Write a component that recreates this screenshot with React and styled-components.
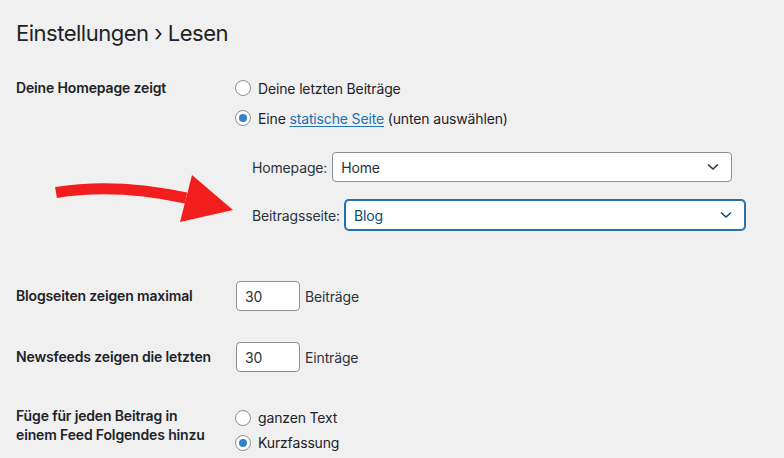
import React from 'react';
import styled, { createGlobalStyle } from 'styled-components';

const colors = {
    page: '#f0f0f1',
    text: '#1d2327',
    soft: '#2c3338',
    border: '#8c8f94',
    blue: '#2271b1',
    radioDot: '#3582c4',
    focusText: '#0a4b78',
    arrow: '#f21d1d',
};

const GlobalStyle = createGlobalStyle`
    html, body {
        margin: 0;
        padding: 0;
        background: ${colors.page};
    }
    body {
        font-family: Inter, "Liberation Sans", Arial, sans-serif;
        font-size: 14px;
        letter-spacing: -0.15px;
        color: ${colors.text};
        -webkit-font-smoothing: antialiased;
    }
`;

const Page = styled.div`
    position: relative;
    width: 784px;
    height: 458px;
    overflow: hidden;
    padding: 18px 16px 0;
    box-sizing: border-box;
`;

const Title = styled.h1`
    margin: 0;
    font-size: 22px;
    font-weight: 400;
    letter-spacing: -0.5px;
    line-height: 30px;
    color: ${colors.text};
`;

const Row = styled.div`
    display: grid;
    grid-template-columns: 220px 1fr;
    align-items: ${(p) => (p.$center ? 'center' : 'start')};
    margin-top: ${(p) => p.$top}px;
`;

const RowLabel = styled.div`
    font-weight: 600;
    line-height: ${(p) => p.$lh || 30}px;
    padding-top: ${(p) => p.$pad || 0}px;
`;

const Options = styled.div`
    display: flex;
    flex-direction: column;
`;

const Option = styled.label`
    display: flex;
    align-items: center;
    height: ${(p) => p.$h || 30}px;
    gap: 7px;
    margin-left: -1px;
`;

const Radio = styled.input.attrs({ type: 'radio' })`
    appearance: none;
    margin: 0;
    width: 16px;
    height: 16px;
    border: 1px solid ${colors.border};
    border-radius: 50%;
    background: #fff;
    box-sizing: border-box;
    display: grid;
    place-items: center;
    flex-shrink: 0;

    &:checked::before {
        content: '';
        width: 8px;
        height: 8px;
        border-radius: 50%;
        background: ${colors.radioDot};
    }
`;

const Link = styled.a`
    color: ${colors.blue};
    text-decoration: underline;
    text-underline-offset: 2px;
`;

const PageSelects = styled.div`
    display: flex;
    flex-direction: column;
    gap: 18px;
    margin-top: 19px;
    padding-left: 16px;
`;

const SelectRow = styled.div`
    display: flex;
    align-items: center;
    gap: 5px;
    color: ${colors.soft};
`;

const SelectBox = styled.div`
    width: 400px;
    height: 30px;
    box-sizing: border-box;
    display: flex;
    align-items: center;
    justify-content: space-between;
    padding: 0 12px 0 8px;
    background: #fff;
    border: 1px solid ${(p) => (p.$focus ? colors.blue : colors.border)};
    box-shadow: ${(p) => (p.$focus ? `0 0 0 1px ${colors.blue}` : 'none')};
    border-radius: 4px;
    color: ${(p) => (p.$focus ? colors.focusText : colors.soft)};
`;

const NumberRow = styled.div`
    display: flex;
    align-items: center;
    gap: 5px;
    color: ${colors.soft};
`;

const NumberInput = styled.div`
    width: 64px;
    height: 30px;
    box-sizing: border-box;
    display: flex;
    align-items: center;
    padding: 0 8px;
    background: #fff;
    border: 1px solid ${colors.border};
    border-radius: 4px;
    color: ${colors.soft};
`;

const ArrowLayer = styled.svg`
    position: absolute;
    left: 0;
    top: 0;
    pointer-events: none;
`;

function Chevron() {
    return (
        <svg width="12" height="8" viewBox="0 0 12 8">
            <polyline points="1,1.5 6,6 11,1.5" fill="none" stroke="currentColor" strokeWidth="1.6" />
        </svg>
    );
}

function Select({ label, value, focus }) {
    return (
        <SelectRow>
            <span>{label}</span>
            <SelectBox $focus={focus}>
                <span>{value}</span>
                <Chevron />
            </SelectBox>
        </SelectRow>
    );
}

function NumberField({ value, unit }) {
    return (
        <NumberRow>
            <NumberInput>{value}</NumberInput>
            <span>{unit}</span>
        </NumberRow>
    );
}

export default function App() {
    return (
        <Page>
            <GlobalStyle />
            <Title>Einstellungen › Lesen</Title>

            <Row $top={25}>
                <RowLabel>Deine Homepage zeigt</RowLabel>
                <div>
                    <Options>
                        <Option>
                            <Radio name="front" readOnly />
                            Deine letzten Beiträge
                        </Option>
                        <Option>
                            <Radio name="front" defaultChecked />
                            <span>
                                Eine <Link href="#">statische Seite</Link> (unten auswählen)
                            </span>
                        </Option>
                    </Options>
                    <PageSelects>
                        <Select label="Homepage:" value="Home" />
                        <Select label="Beitragsseite:" value="Blog" focus />
                    </PageSelects>
                </div>
            </Row>

            <Row $top={51} $center>
                <RowLabel>Blogseiten zeigen maximal</RowLabel>
                <NumberField value="30" unit="Beiträge" />
            </Row>

            <Row $top={31} $center>
                <RowLabel>Newsfeeds zeigen die letzten</RowLabel>
                <NumberField value="30" unit="Einträge" />
            </Row>

            <Row $top={33}>
                <RowLabel $lh={19} $pad={1}>
                    Füge für jeden Beitrag in<br />einem Feed Folgendes hinzu
                </RowLabel>
                <Options>
                    <Option $h={25}>
                        <Radio name="feed" readOnly />
                        ganzen Text
                    </Option>
                    <Option $h={25}>
                        <Radio name="feed" defaultChecked />
                        Kurzfassung
                    </Option>
                </Options>
            </Row>

            <ArrowLayer width="784" height="458" viewBox="0 0 784 458">
                <path
                    d="M56 192.5 Q115 182.8 186 198"
                    fill="none"
                    stroke={colors.arrow}
                    strokeWidth="11"
                />
                <polygon points="192,175 233,210 180,222" fill={colors.arrow} />
            </ArrowLayer>
        </Page>
    );
}
